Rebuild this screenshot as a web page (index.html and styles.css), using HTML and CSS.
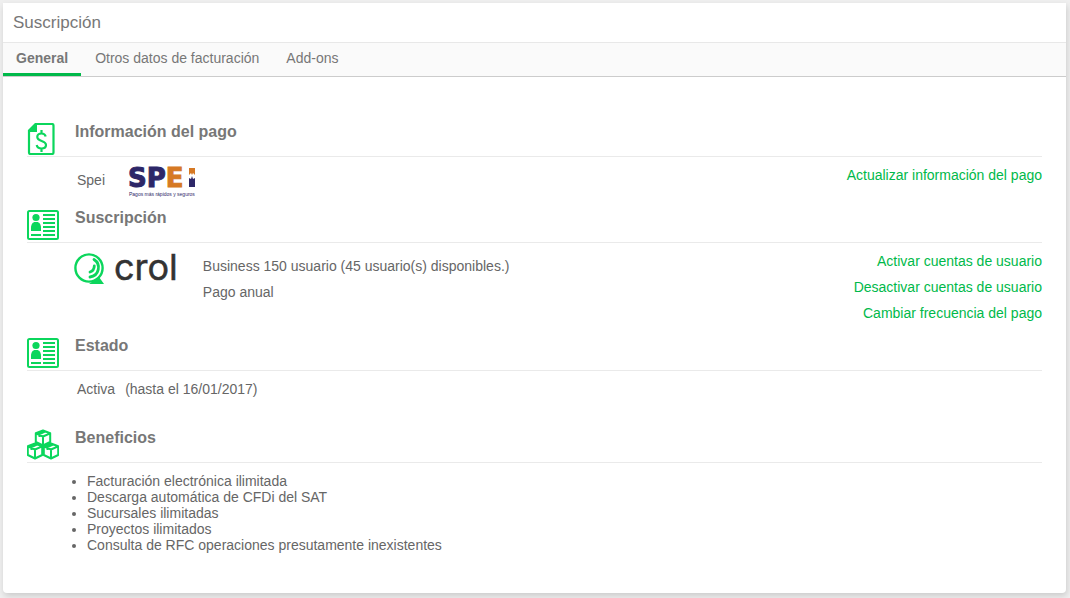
FILE: index.html
```html
<!DOCTYPE html>
<html lang="es">
<head>
    <meta charset="UTF-8">
    <meta name="viewport" content="width=device-width, initial-scale=1.0">
    <title>Suscripción</title>
    <link rel="stylesheet" href="styles.css">
</head>
<body>
    <svg class="symbols" width="0" height="0" aria-hidden="true">
        <symbol id="icon-card" viewBox="0 0 32 32">
            <rect x="1" y="2" width="30" height="28" rx="1.500" fill="none" stroke="currentColor" stroke-width="2"/>
            <circle cx="9" cy="8.500" r="3.600" fill="currentColor"/>
            <path d="M4 22v-3c0-4 2-6 4-6h2c2 0 4 2 4 6v3z" fill="currentColor"/>
            <path d="M16 6h12M16 10h12M16 14h12M16 18h12M16 22h12M4 26h10M16 26h12" stroke="currentColor" stroke-width="2"/>
        </symbol>
    </svg>

    <main class="panel">
        <h1 class="panel-title">Suscripción</h1>
        <nav class="tabs">
            <a class="tab active" href="#general">General</a>
            <a class="tab" href="#facturacion">Otros datos de facturación</a>
            <a class="tab" href="#addons">Add-ons</a>
        </nav>

        <div class="content" id="general">
            <section>
                <div class="section-header">
                    <svg class="icon" viewBox="0 0 32 32">
                        <path d="M8 1h17q1.500 0 1.500 1.500v27q0 1.500-1.500 1.500H3.500q-1.500 0-1.500-1.500V7" fill="none" stroke="currentColor" stroke-width="2.200"/>
                        <path d="M8 0h2v9H1V7z" fill="currentColor"/>
                        <path d="M18.700 13.500c-.5-2-2-3-4.200-3-2.600 0-4.200 1.500-4.200 3.500 0 5 8.700 3 8.700 8 0 2-1.700 3.500-4.500 3.500-2.500 0-4.300-1.300-4.800-3.500M14.500 7v3.500M14.500 25.500V29" fill="none" stroke="currentColor" stroke-width="2.200"/>
                    </svg>
                    <h2>Información del pago</h2>
                </div>
                <div class="section-body">
                    <div class="details payment">
                        <span class="method">Spei</span>
                        <svg class="spei-logo" viewBox="0 0 72 31" role="img" aria-label="SPEI">
                            <text class="spei-word" x="0" y="20">SP<tspan class="orange">E</tspan></text>
                            <path d="M61 1h6v7l-2-2-1 2-1-2-2 2z" fill="#d67924"/>
                            <path d="M61 11l2 1 1-3 1 3 2-1v9h-6z" fill="#2d2768"/>
                            <text class="spei-slogan" x="1" y="29">Pagos más rápidos y seguros</text>
                        </svg>
                    </div>
                    <div class="links">
                        <a href="#">Actualizar información del pago</a>
                    </div>
                </div>
            </section>

            <section>
                <div class="section-header">
                    <svg class="icon"><use href="#icon-card"/></svg>
                    <h2>Suscripción</h2>
                </div>
                <div class="section-body">
                    <div class="details plan">
                        <div class="crol-logo">
                            <svg class="crol-mark" viewBox="0 0 31 31">
                                <circle cx="15" cy="15" r="13.600" fill="none" stroke="#0bd65c" stroke-width="2.400"/>
                                <path d="M20 6.500a9.500 9.500 0 0 1-4 17.500M20.300 13a6.500 6.500 0 0 1-4.300 6" fill="none" stroke="#0bd65c" stroke-width="2.800" stroke-linecap="round"/>
                                <path d="M15 31l10-7 5 7z" fill="#0bd65c"/>
                            </svg>
                            <span class="crol-name">crol</span>
                        </div>
                        <div class="plan-text">
                            <div>Business 150 usuario (45 usuario(s) disponibles.)</div>
                            <div>Pago anual</div>
                        </div>
                    </div>
                    <div class="links">
                        <a href="#">Activar cuentas de usuario</a>
                        <a href="#">Desactivar cuentas de usuario</a>
                        <a href="#">Cambiar frecuencia del pago</a>
                    </div>
                </div>
            </section>

            <section>
                <div class="section-header">
                    <svg class="icon"><use href="#icon-card"/></svg>
                    <h2>Estado</h2>
                </div>
                <div class="section-body status">
                    <span>Activa</span>
                    <span>(hasta el 16/01/2017)</span>
                </div>
            </section>

            <section>
                <div class="section-header">
                    <svg class="icon" viewBox="0 0 32 32">
                        <g fill="none" stroke="currentColor" stroke-width="2" stroke-linejoin="round">
                            <path id="box" d="M16 1.500l7.200 2.800V13L16 16.500 8.800 13V4.300zM8.800 4.300L16 7.500l7.200-3.200M16 7.500v9M18 2.500l-5.500 2.500v3"/>
                            <use href="#box" x="-8" y="13"/>
                            <use href="#box" x="8" y="13"/>
                        </g>
                    </svg>
                    <h2>Beneficios</h2>
                </div>
                <ul class="benefits">
                    <li>Facturación electrónica ilimitada</li>
                    <li>Descarga automática de CFDi del SAT</li>
                    <li>Sucursales ilimitadas</li>
                    <li>Proyectos ilimitados</li>
                    <li>Consulta de RFC operaciones presutamente inexistentes</li>
                </ul>
            </section>
        </div>
    </main>
</body>
</html>
```

FILE: styles.css
```css
* {
    box-sizing: border-box;
}
body {
    margin: 0;
    padding: 3px 4px 5px 3px;
    background-color: #efefef;
    color: #666;
    font-family: "Liberation Sans", Arial, sans-serif;
    font-size: 14px;
    line-height: 16px;
}
a {
    color: #00b94a;
    text-decoration: none;
}
.symbols {
    position: absolute;
}
.panel {
    background-color: #fff;
    border-radius: 0 0 4px 4px;
    box-shadow: 1px 3px 6px rgba(0, 0, 0, 0.15);
}
.panel-title {
    margin: 0;
    padding: 0 10px;
    font-size: 17px;
    font-weight: normal;
    line-height: 39px;
    color: #777;
}
.tabs {
    display: flex;
    gap: 1px;
    background-color: #fafafa;
    border-top: 1px solid #e8e8e8;
    border-bottom: 1px solid #ccc;
}
.tab {
    padding: 0 13px;
    line-height: 30px;
    border-bottom: 3px solid transparent;
    color: #777;
}
.tab.active {
    font-weight: bold;
    border-bottom-color: #00b94a;
}
.content {
    padding: 45px 24px 30px;
}
.section-header {
    display: flex;
    gap: 16px;
    height: 35px;
    border-bottom: 1px solid #eaeaea;
}
.section-header h2 {
    margin: 0;
    font-size: 16px;
    line-height: 20px;
    color: #777;
}
.icon {
    width: 32px;
    height: 32px;
    margin-top: 1px;
    color: #0bd65c;
}
.section-body {
    display: flex;
    justify-content: space-between;
    padding: 5px 0 10px 47px;
}
.details {
    display: flex;
    padding-top: 5px;
    line-height: 26px;
}
.method {
    padding-left: 3px;
}
.payment {
    gap: 23px;
}
.spei-logo {
    width: 72px;
    height: 31px;
    overflow: visible;
}
.spei-word {
    font-family: "DejaVu Sans", sans-serif;
    font-size: 26px;
    font-weight: bold;
    fill: #2d2768;
    stroke: #2d2768;
    stroke-width: 1px;
}
.spei-word .orange {
    fill: #d67924;
    stroke: #d67924;
}
.spei-slogan {
    font-family: "Liberation Sans", Arial, sans-serif;
    font-size: 5px;
    fill: #2d2768;
}
.plan {
    gap: 25px;
}
.crol-logo {
    display: flex;
    gap: 9px;
}
.crol-mark {
    width: 31px;
    height: 31px;
}
.crol-name {
    font-family: Inter, sans-serif;
    font-size: 36px;
    line-height: 28px;
    color: #333;
    -webkit-text-stroke: 0.5px #333;
}
.links {
    display: flex;
    flex-direction: column;
    text-align: right;
    line-height: 26px;
}
.status {
    justify-content: flex-start;
    gap: 10px;
    min-height: 57px;
    padding-left: 50px;
    line-height: 26px;
}
.benefits {
    margin: 0;
    padding: 10px 0 10px 60px;
}
```
